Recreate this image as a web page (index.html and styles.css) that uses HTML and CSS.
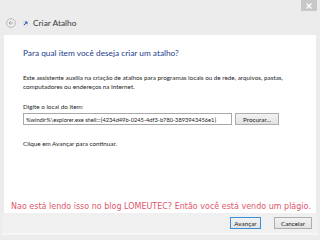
FILE: index.html
```html
<!DOCTYPE html>
<html lang="pt">
<head>
  <meta charset="UTF-8" />
  <title>Criar Atalho</title>
  <link rel="stylesheet" href="styles.css">
</head>
<body>
  <div class="window">

    <!-- Window chrome -->
    <div class="topbar">
      <span class="close" aria-label="Fechar">
        <svg width="6" height="6" viewBox="0 0 6 6"><path d="M0.5 0.5L5.5 5.5M5.5 0.5L0.5 5.5" stroke="#fff" stroke-width="1.2"/></svg>
      </span>
    </div>

    <div class="navbar">
      <svg class="back" width="10" height="10" viewBox="0 0 10 10">
        <circle cx="5" cy="5" r="4.4" fill="none" stroke="#b5b5b5" stroke-width="0.9"/>
        <path d="M7 5H3M4.8 3.2L3 5l1.8 1.8" fill="none" stroke="#a0a0a0" stroke-width="0.9"/>
      </svg>
      <svg class="app-icon" width="5" height="5" viewBox="0 0 5 5">
        <rect x="0" y="0" width="5" height="5" fill="#d8dde6"/>
        <path d="M1 4L4 1M2 1h2v2" fill="none" stroke="#2b5fb0" stroke-width="1"/>
      </svg>
      <span class="title">Criar Atalho</span>
    </div>

    <!-- Wizard page -->
    <main class="content">
      <h1 class="heading">Para qual item você deseja criar um atalho?</h1>

      <p class="intro">Este assistente auxilia na criação de atalhos para programas locais ou de rede, arquivos, pastas, computadores ou endereços na Internet.</p>

      <label class="field-label" for="location">Digite o local do item:</label>
      <div class="field-row">
        <input id="location" class="location" type="text" value="%windir%\explorer.exe shell:::{4234d49b-0245-4df3-b780-3893943456e1}">
        <button type="button" class="btn btn-browse">Procurar...</button>
      </div>

      <p class="hint">Clique em Avançar para continuar.</p>

      <p class="notice">Nao está lendo isso no blog LOMEUTEC? Então você está vendo um plágio.</p>
    </main>

    <!-- Buttons -->
    <footer class="footer">
      <button type="button" class="btn btn-next">Avançar</button>
      <button type="button" class="btn btn-cancel">Cancelar</button>
    </footer>
  </div>
</body>
</html>
```

FILE: styles.css
```css
/* Base */
body {
  margin: 0;
  font-family: 'Lato', 'Noto Sans', sans-serif;
  background: #ececec;
}

.window {
  width: 320px;
  height: 240px;
  display: flex;
  flex-direction: column;
  background: #ececec;
  overflow: hidden;
}

/* Chrome */
.topbar {
  height: 11px;
  display: flex;
  justify-content: flex-end;
  padding-right: 3px;
}

.close {
  width: 16px;
  height: 11px;
  background: #c8c8c8;
  display: flex;
  align-items: center;
  justify-content: center;
}

.navbar {
  height: 24px;
  display: flex;
  align-items: center;
  padding-left: 6px;
  padding-bottom: 1px;
  box-sizing: border-box;
}

.back {
  margin-right: 7px;
}

.app-icon {
  margin-right: 5px;
  margin-top: 2px;
}

.title {
  font-size: 8.4px;
  color: #3a3a3a;
}

/* Page */
.content {
  height: 178px;
  margin: 0 4px;
  background: #fff;
  padding: 13px 0 0 19px;
  box-sizing: border-box;
  display: flex;
  flex-direction: column;
  color: #1e1e1e;
}

.heading {
  margin: 0 0 15px 0;
  font-size: 8.3px;
  line-height: 10px;
  font-weight: 400;
  color: #1d3c8e;
}

.intro {
  margin: 0 0 11px 0;
  font-size: 6.3px;
  line-height: 9px;
  width: 262px;
}

.field-label {
  font-size: 6.3px;
  line-height: 9px;
  margin-bottom: 2px;
}

.field-row {
  display: flex;
  gap: 3px;
  align-items: center;
}

.location {
  width: 209px;
  height: 12px;
  box-sizing: border-box;
  border: 1px solid #a9a9a9;
  padding: 0 2px;
  margin: 0;
  font-family: inherit;
  font-size: 5.7px;
  color: #222;
  background: #fff;
}

.btn {
  height: 12px;
  padding: 0;
  margin: 0;
  font-family: inherit;
  font-size: 6.3px;
  color: #222;
  background: linear-gradient(#f2f2f2, #e3e3e3);
  border: 1px solid #adadad;
  box-sizing: border-box;
}

.btn-browse {
  width: 44px;
}

.hint {
  margin: 14px 0 0 0;
  font-size: 6.3px;
  line-height: 9px;
}

.notice {
  margin: auto 0 2px -12px;
  font-family: 'DejaVu Sans', sans-serif;
  font-size: 8px;
  color: #e0566a;
  white-space: nowrap;
}

/* Footer */
.footer {
  height: 20px;
  display: flex;
  justify-content: flex-end;
  align-items: center;
  gap: 13px;
  padding-right: 6px;
  border-bottom: 2px solid #f6f6f6;
  margin: 0 2px;
  background: #f0f0f0;
}

.btn-next {
  width: 31px;
  border-color: #3c8fd6;
}

.btn-cancel {
  width: 38px;
}
```
